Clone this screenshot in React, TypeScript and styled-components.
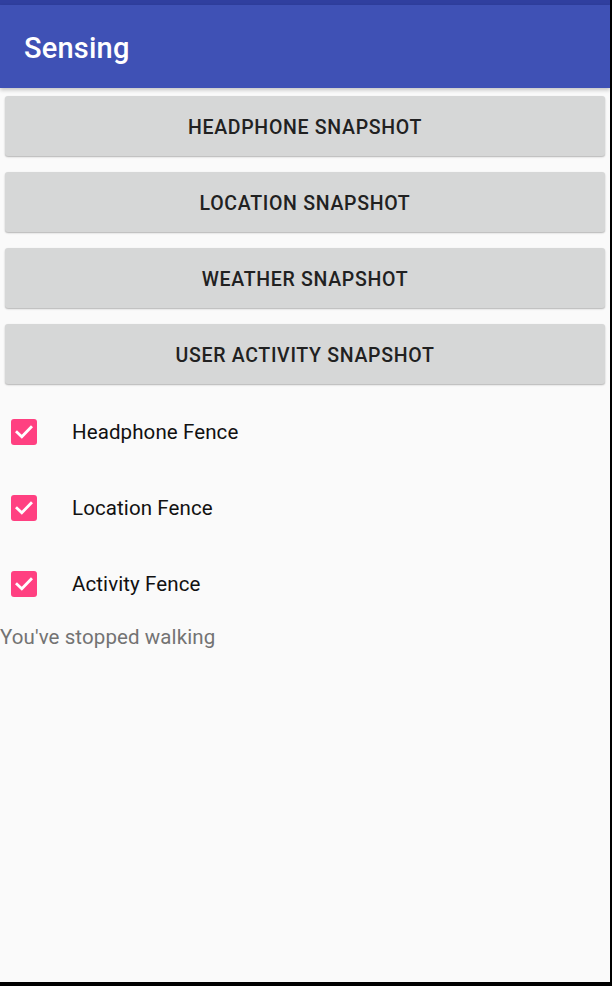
import React from 'react';
import styled, { createGlobalStyle } from 'styled-components';

const GlobalStyle = createGlobalStyle`
  html, body {
    margin: 0;
    padding: 0;
    background: #000;
  }
  body {
    font-family: Roboto, "Noto Sans", sans-serif;
  }
`;

const snapshots = [
  'HEADPHONE SNAPSHOT',
  'LOCATION SNAPSHOT',
  'WEATHER SNAPSHOT',
  'USER ACTIVITY SNAPSHOT',
];

const fences = ['Headphone Fence', 'Location Fence', 'Activity Fence'];

const Screen = styled.div`
  width: 610px;
  height: 982px;
  background: #fafafa;
  display: flex;
  flex-direction: column;
  overflow: hidden;
`;

const StatusBar = styled.div`
  height: 5px;
  background: #303f9f;
`;

const AppBar = styled.header`
  height: 83px;
  background: #3f51b5;
  display: flex;
  align-items: center;
  padding-left: 24px;
  box-shadow: 0 2px 4px rgba(0, 0, 0, 0.22);
  position: relative;
  z-index: 1;
`;

const Title = styled.h1`
  margin: 2px 0 0;
  color: #fff;
  font-size: 29px;
  font-weight: 500;
  letter-spacing: 0.2px;
`;

const Content = styled.main`
  display: flex;
  flex-direction: column;
  padding-top: 8px;
`;

const ButtonList = styled.div`
  display: flex;
  flex-direction: column;
  gap: 16px;
  padding: 0 5px;
`;

const SnapshotButton = styled.button`
  height: 60px;
  border: none;
  border-radius: 3px;
  background: #d6d7d7;
  box-shadow: 0 1px 2px rgba(0, 0, 0, 0.22), 0 1px 1px rgba(0, 0, 0, 0.08);
  color: #212121;
  font-family: Roboto, "Noto Sans", sans-serif;
  font-size: 19.5px;
  font-weight: 500;
  letter-spacing: 0.7px;
  padding: 2px 0 0;
  cursor: pointer;
`;

const FenceList = styled.div`
  display: flex;
  flex-direction: column;
  gap: 28px;
  padding-top: 24px;
`;

const FenceRow = styled.label`
  display: flex;
  align-items: center;
  height: 48px;
  padding-left: 11px;
`;

const Box = styled.span`
  width: 26px;
  height: 26px;
  border-radius: 3px;
  background: #ff4081;
  display: flex;
  align-items: center;
  justify-content: center;
  margin-right: 35px;
`;

const FenceLabel = styled.span`
  font-size: 20.5px;
  color: #111;
  letter-spacing: 0.1px;
`;

const Status = styled.p`
  margin: 17px 0 0;
  font-size: 20.5px;
  color: #737373;
  letter-spacing: 0.1px;
`;

const Check = () => (
  <svg width="22" height="22" viewBox="0 0 22 22">
    <path
      d="M4 11.2 L8.8 15.8 L18 6.2"
      fill="none"
      stroke="#fff"
      strokeWidth="2.8"
      strokeLinecap="square"
    />
  </svg>
);

export default function App() {
  return (
    <>
      <GlobalStyle />
      <Screen>
        <StatusBar />
        <AppBar>
          <Title>Sensing</Title>
        </AppBar>
        <Content>
          <ButtonList>
            {snapshots.map((s) => (
              <SnapshotButton key={s}>{s}</SnapshotButton>
            ))}
          </ButtonList>
          <FenceList>
            {fences.map((f) => (
              <FenceRow key={f}>
                <Box>
                  <Check />
                </Box>
                <FenceLabel>{f}</FenceLabel>
              </FenceRow>
            ))}
          </FenceList>
          <Status>You've stopped walking</Status>
        </Content>
      </Screen>
    </>
  );
}
